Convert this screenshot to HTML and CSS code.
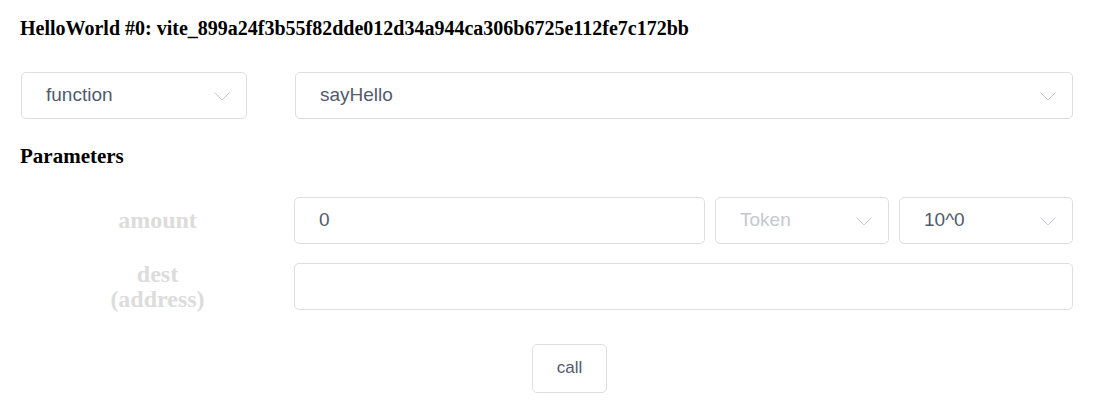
FILE: index.html
```html
<!DOCTYPE html>
<html>
<head>
<meta charset="utf-8">
<link rel="stylesheet" href="styles.css">
</head>
<body>
<div class="page">
  <h3 class="title">HelloWorld #0: vite_899a24f3b55f82dde012d34a944ca306b6725e112fe7c172bb</h3>
  <div class="row top-row">
    <div class="select type-select"><span class="value">function</span><svg class="chev" width="16" height="9" viewBox="0 0 16 9"><polyline points="0.5,0.5 8,8 15.5,0.5" fill="none" stroke="#c5c8ce" stroke-width="1"/></svg></div>
    <div class="select fn-select"><span class="value">sayHello</span><svg class="chev" width="16" height="9" viewBox="0 0 16 9"><polyline points="0.5,0.5 8,8 15.5,0.5" fill="none" stroke="#c5c8ce" stroke-width="1"/></svg></div>
  </div>
  <h3 class="subtitle">Parameters</h3>
  <div class="param amount-row">
    <div class="label">amount</div>
    <div class="fields">
      <div class="input amount-input"><span class="value">0</span></div>
      <div class="select small-select"><span class="placeholder">Token</span><svg class="chev" width="16" height="9" viewBox="0 0 16 9"><polyline points="0.5,0.5 8,8 15.5,0.5" fill="none" stroke="#c5c8ce" stroke-width="1"/></svg></div>
      <div class="select small-select"><span class="value">10^0</span><svg class="chev" width="16" height="9" viewBox="0 0 16 9"><polyline points="0.5,0.5 8,8 15.5,0.5" fill="none" stroke="#c5c8ce" stroke-width="1"/></svg></div>
    </div>
  </div>
  <div class="param dest-row">
    <div class="label">dest<br>(address)</div>
    <div class="fields">
      <div class="input full-input"></div>
    </div>
  </div>
  <div class="actions">
    <button class="btn">call</button>
  </div>
</div>
</body>
</html>
```

FILE: styles.css
```css
html, body {
  margin: 0;
  padding: 0;
  background: #fff;
}
.page {
  padding: 16px 21px 0 21px;
  font-family: "Liberation Sans", Arial, sans-serif;
  color: #515a6e;
}
.title, .subtitle {
  margin: 0;
  font-family: "Liberation Serif", "Times New Roman", serif;
  font-weight: bold;
  font-size: 20px;
  line-height: 24px;
  color: #000;
  margin-left: -1px;
}
.row {
  display: flex;
  gap: 48px;
}
.top-row {
  margin-top: 32px;
}
.select, .input {
  box-sizing: border-box;
  height: 47px;
  border: 1px solid #dcdee2;
  border-radius: 5px;
  display: flex;
  align-items: center;
  justify-content: space-between;
  padding: 0 16px 2px 24px;
  font-size: 19px;
  color: #515a6e;
  background: #fff;
}
.type-select {
  width: 226px;
}
.fn-select {
  flex: 1;
}
.chev {
  display: block;
  margin-top: 3px;
}
.placeholder {
  color: #c5c8ce;
}
.subtitle {
  margin-top: 25px;
  font-size: 21px;
}
.param {
  display: flex;
  align-items: center;
  height: 47px;
}
.amount-row {
  margin-top: 29px;
}
.dest-row {
  margin-top: 19px;
}
.label {
  width: 273px;
  flex: none;
  text-align: center;
  font-family: "Liberation Serif", "Times New Roman", serif;
  font-weight: bold;
  font-size: 24px;
  line-height: 25px;
  color: #dcdcdc;
}
.fields {
  flex: 1;
  display: flex;
  gap: 10px;
}
.amount-input {
  flex: none;
  width: 411px;
}
.small-select {
  width: 174px;
  flex: none;
}
.full-input {
  flex: 1;
}
.actions {
  margin-top: 34px;
  padding-left: 511px;
}
.btn {
  box-sizing: border-box;
  width: 75px;
  height: 49px;
  border: 1px solid #dcdee2;
  border-radius: 5px;
  background: #fff;
  font-family: "Liberation Sans", Arial, sans-serif;
  font-size: 17px;
  color: #515a6e;
  padding: 0 0 2px 0;
}
```
